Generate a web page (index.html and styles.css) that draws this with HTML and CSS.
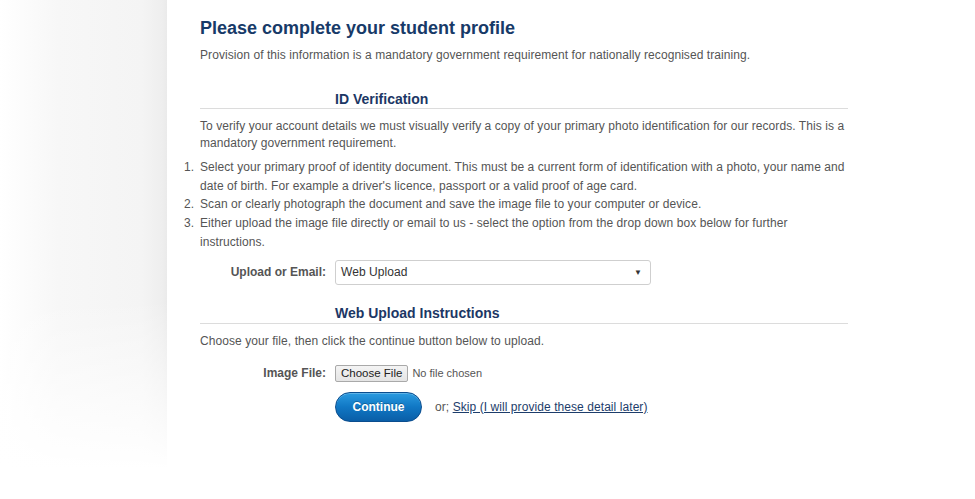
FILE: index.html
```
<!DOCTYPE html>
<html>
<head>
<meta charset="utf-8">
<link rel="stylesheet" href="styles.css">
</head>
<body>
<div class="page">
  <div class="side"></div>
  <div class="main">
    <h1 class="title">Please complete your student profile</h1>
    <p class="lead">Provision of this information is a mandatory government requirement for nationally recognised training.</p>

    <h2 class="section">ID Verification</h2>
    <p class="text">To verify your account details we must visually verify a copy of your primary photo identification for our records. This is a mandatory government requirement.</p>
    <ol class="steps">
      <li>Select your primary proof of identity document. This must be a current form of identification with a photo, your name and date of birth. For example a driver's licence, passport or a valid proof of age card.</li>
      <li>Scan or clearly photograph the document and save the image file to your computer or device.</li>
      <li>Either upload the image file directly or email to us - select the option from the drop down box below for further instructions.</li>
    </ol>

    <div class="row row-select">
      <label class="label">Upload or Email:</label>
      <div class="select"><span>Web Upload</span><span class="arrow">▼</span></div>
    </div>

    <h2 class="section section-2">Web Upload Instructions</h2>
    <p class="text text-2">Choose your file, then click the continue button below to upload.</p>

    <div class="row row-file">
      <label class="label label-normal">Image File:</label>
      <div class="file"><button class="file-btn" type="button">Choose File</button><span class="file-none">No file chosen</span></div>
    </div>

    <div class="row row-actions">
      <span class="label"></span>
      <div class="actions"><button class="continue" type="button">Continue</button><span class="or">or; <a href="#" class="skip">Skip (I will provide these detail later)</a></span></div>
    </div>
  </div>
</div>
</body>
</html>
```

FILE: styles.css
```
html, body {
  margin: 0;
  padding: 0;
  background: #fff;
}
body {
  font-family: "Liberation Sans", Arial, sans-serif;
  font-size: 12px;
  color: #555;
}
.page {
  display: flex;
  min-height: 499px;
}
.side {
  width: 167px;
  flex: none;
  height: 499px;
  background:
    linear-gradient(to bottom, rgba(255,255,255,0) 0%, rgba(255,255,255,0) 60%, #fff 94%),
    linear-gradient(to right, #fff 0%, #f7f7f7 35%, #f4f4f4 85%, #eeeeee 97%, #eaeaea 100%);
}
.main {
  width: 648px;
  padding: 17px 0 0 33px;
}
.title {
  margin: 0;
  font-size: 18px;
  line-height: 22px;
  font-weight: bold;
  color: #173a68;
}
.lead, .text, .steps, .or, .select {
  letter-spacing: 0.07px;
}
.lead {
  margin: 8px 0 0;
  line-height: 16px;
}
.section {
  margin: 27px 0 0;
  padding: 0 0 0 135px;
  font-size: 14px;
  line-height: 18px;
  font-weight: bold;
  color: #1c3765;
  border-bottom: 1px solid #dcdcdc;
}
.section-2 {
  margin-top: 19px;
  padding-bottom: 1px;
}
.text {
  margin: 9px 0 0;
  line-height: 17px;
}
.text-2 {
  margin-top: 9px;
}
.steps {
  margin: 6px 0 0;
  padding: 0;
  list-style: none;
  counter-reset: step;
  line-height: 18.7px;
}
.steps li {
  counter-increment: step;
  position: relative;
}
.steps li::before {
  content: counter(step) ".";
  position: absolute;
  left: -16px;
}
.row {
  display: grid;
  grid-template-columns: 126px 1fr;
  column-gap: 9px;
  align-items: center;
}
.label {
  text-align: right;
  font-weight: bold;
  color: #555;
}
.row-select {
  margin-top: 8px;
}
.select {
  height: 23px;
  border: 1px solid #cfcfcf;
  border-radius: 3px;
  display: flex;
  align-items: center;
  justify-content: space-between;
  padding: 0 8px 0 5px;
  width: 301px;
  color: #333;
}
.arrow {
  font-size: 8px;
  color: #333;
}
.row-file {
  margin-top: 15px;
}
.file {
  display: flex;
  align-items: center;
}
.file-btn {
  font-family: "Liberation Sans", Arial, sans-serif;
  font-size: 11.5px;
  color: #222;
  height: 17px;
  padding: 0 5px;
  background: linear-gradient(#f4f4f4, #e4e4e4);
  border: 1px solid #a9a9a9;
  border-radius: 2px;
  line-height: 15px;
}
.file-none {
  margin-left: 4px;
  font-size: 11px;
  color: #555;
}
.row-actions {
  margin-top: 10px;
}
.actions {
  display: flex;
  align-items: center;
}
.continue {
  width: 87px;
  height: 30px;
  border-radius: 15px;
  border: 1px solid #0a4d8e;
  background: linear-gradient(#2a9be0 0%, #1077c4 50%, #0a5ea7 100%);
  color: #fff;
  font-family: "Liberation Sans", Arial, sans-serif;
  font-weight: bold;
  font-size: 12px;
  text-shadow: 0 -1px 0 rgba(0,0,0,0.25);
  box-shadow: inset 0 1px 0 rgba(255,255,255,0.25);
}
.or {
  margin-left: 13px;
  color: #555;
}
.skip {
  color: #1d3d6b;
  text-decoration: underline;
}
```
